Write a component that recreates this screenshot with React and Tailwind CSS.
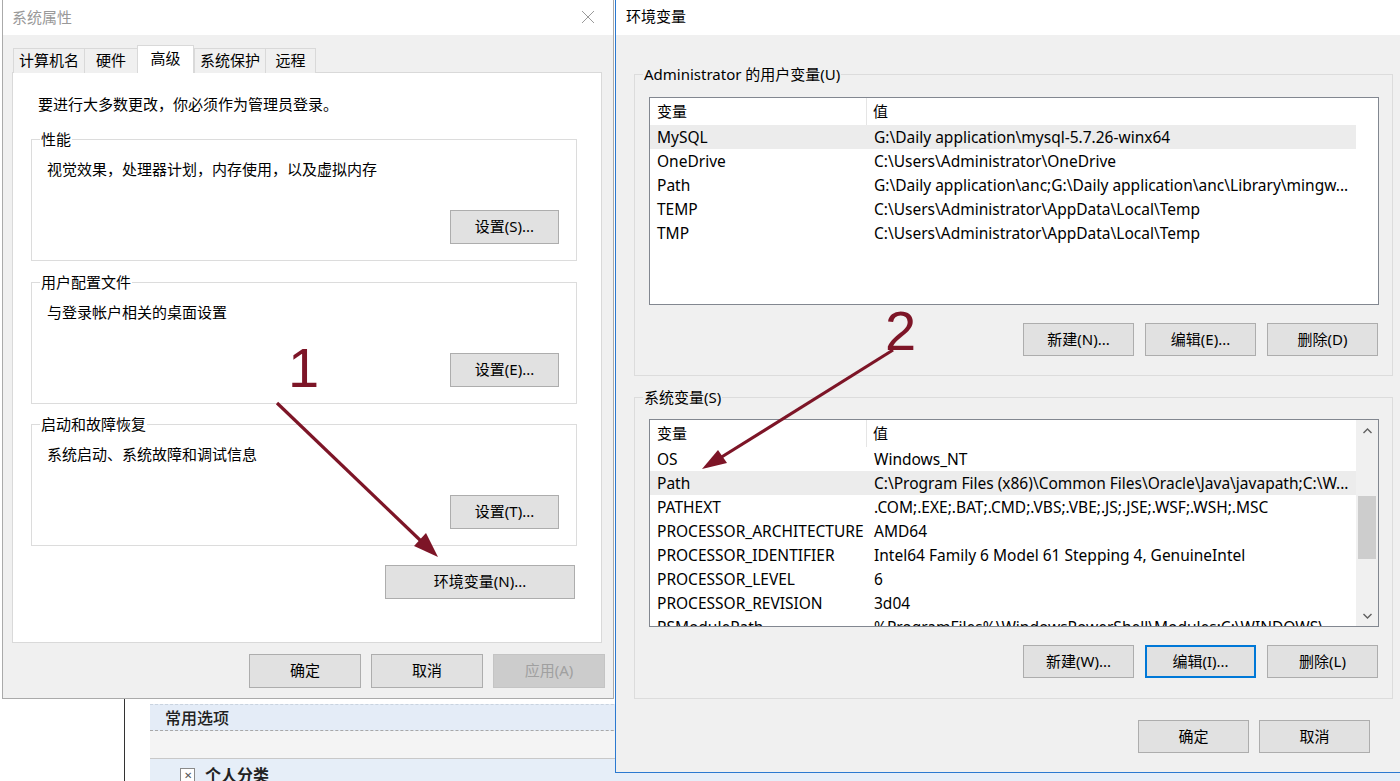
import React from "react";

const FONT = "font-['Noto_Sans','Noto_Sans_CJK_SC',sans-serif]";

function Btn({ children, className = "", disabled = false, focused = false }) {
  let look = "bg-[#e1e1e1] border border-[#adadad] text-black";
  if (disabled) look = "bg-[#cccccc] border border-[#c4c4c4] text-[#a0a0a0]";
  if (focused) look = "bg-[#e1e1e1] border-2 border-[#0078d7] text-black";
  return (
    <div className={`flex items-center justify-center text-[15px] leading-[20px] pb-[2px] shrink-0 ${look} ${className}`}>
      {children}
    </div>
  );
}

function GroupBox({ label, labelBg = "bg-white", className = "", children }) {
  return (
    <div className={`relative border border-[#dcdcdc] shrink-0 ${className}`}>
      <span className={`absolute left-[8px] -top-[11px] px-[1px] text-[15px] leading-[20px] text-black ${labelBg}`}>
        {label}
      </span>
      {children}
    </div>
  );
}

function SysGroup({ label, desc, btn, className = "" }) {
  return (
    <GroupBox label={label} className={`w-[546px] h-[122px] flex flex-col ${className}`}>
      <div className="pl-[15px] pt-[19px] text-[15px] leading-[20px] text-black">{desc}</div>
      <div className="mt-auto mb-[16px] mr-[17px] self-end">
        <Btn className="w-[109px] h-[34px]">{btn}</Btn>
      </div>
    </GroupBox>
  );
}

function Chevron({ up }) {
  return (
    <svg width="9" height="6" viewBox="0 0 9 6">
      <polyline
        points={up ? "0.5,5 4.5,1 8.5,5" : "0.5,1 4.5,5 8.5,1"}
        fill="none"
        stroke="#606060"
        strokeWidth="1.4"
      />
    </svg>
  );
}

function VarList({ rows, highlight, scroll }) {
  return (
    <div className="w-[730px] h-[208px] border border-[#828790] bg-white flex overflow-hidden shrink-0">
      <div className="w-[706px] flex flex-col shrink-0">
        <div className="h-[27px] flex shrink-0 text-[15px] text-black">
          <div className="w-[217px] h-full flex items-center pl-[7px] border-r border-[#e5e5e5]">变量</div>
          <div className="flex-1 h-full flex items-center pl-[6px]">值</div>
        </div>
        {rows.map(([k, v], i) => (
          <div
            key={k}
            className={`h-[24px] flex items-center pt-[2px] shrink-0 text-[15.5px] text-black whitespace-nowrap ${
              i === highlight ? "bg-[#ececec]" : ""
            }`}
          >
            <div className="w-[217px] pl-[7px] overflow-hidden">{k}</div>
            <div className="flex-1 pl-[7px] overflow-hidden">{v}</div>
          </div>
        ))}
      </div>
      {scroll && (
        <div className="w-[22px] h-full bg-[#f0f0f0] flex flex-col items-center shrink-0">
          <div className="h-[21px] w-full flex items-center justify-center">
            <Chevron up />
          </div>
          <div className="w-[18px] h-[63px] bg-[#cdcdcd] mt-[55px]" />
          <div className="mt-auto h-[21px] w-full flex items-center justify-center">
            <Chevron />
          </div>
        </div>
      )}
    </div>
  );
}

const userVars = [
  ["MySQL", "G:\\Daily application\\mysql-5.7.26-winx64"],
  ["OneDrive", "C:\\Users\\Administrator\\OneDrive"],
  ["Path", "G:\\Daily application\\anc;G:\\Daily application\\anc\\Library\\mingw..."],
  ["TEMP", "C:\\Users\\Administrator\\AppData\\Local\\Temp"],
  ["TMP", "C:\\Users\\Administrator\\AppData\\Local\\Temp"],
];

const sysVars = [
  ["OS", "Windows_NT"],
  ["Path", "C:\\Program Files (x86)\\Common Files\\Oracle\\Java\\javapath;C:\\W..."],
  ["PATHEXT", ".COM;.EXE;.BAT;.CMD;.VBS;.VBE;.JS;.JSE;.WSF;.WSH;.MSC"],
  ["PROCESSOR_ARCHITECTURE", "AMD64"],
  ["PROCESSOR_IDENTIFIER", "Intel64 Family 6 Model 61 Stepping 4, GenuineIntel"],
  ["PROCESSOR_LEVEL", "6"],
  ["PROCESSOR_REVISION", "3d04"],
  ["PSModulePath", "%ProgramFiles%\\WindowsPowerShell\\Modules;C:\\WINDOWS\\..."],
];

const tabs = [
  ["计算机名", "w-[71px]"],
  ["硬件", "w-[53px]"],
  ["高级", "w-[57px]"],
  ["系统保护", "w-[71px]"],
  ["远程", "w-[51px]"],
];

function SystemProperties() {
  return (
    <div className="absolute left-[2px] top-0 w-[612px] h-[699px] border-x border-b border-[#aaaaaa] bg-[#f0f0f0] flex flex-col z-10">
      <div className="h-[35px] bg-white flex items-center justify-between pl-[9px] pr-[18px] pb-[2px] shrink-0">
        <span className="text-[15px] leading-[20px] text-[#999999]">系统属性</span>
        <svg width="14" height="14" viewBox="0 0 14 14">
          <path d="M1 1L13 13M13 1L1 13" stroke="#9a9a9a" strokeWidth="1" fill="none" />
        </svg>
      </div>
      <div className="flex flex-col pt-[10px] pl-[9px]">
        <div className="flex items-end h-[28px] ml-[1px] -mb-px relative z-10">
          {tabs.map(([t, w], i) =>
            i === 2 ? (
              <div
                key={t}
                className={`${w} h-[28px] bg-white border-x border-t border-[#d9d9d9] flex items-center justify-center text-[15px] text-black pb-[3px]`}
              >
                {t}
              </div>
            ) : (
              <div
                key={t}
                className={`${w} h-[25px] bg-[#f0f0f0] border-t ${
                  i === 4 ? "border-x" : "border-l"
                } border-[#d9d9d9] flex items-center justify-center text-[15px] text-black pb-[1px]`}
              >
                {t}
              </div>
            )
          )}
        </div>
        <div className="w-[590px] h-[571px] bg-white border border-[#d9d9d9] flex flex-col pl-[18px]">
          <div className="mt-[21px] ml-[7px] text-[15px] leading-[20px] text-black">
            要进行大多数更改，你必须作为管理员登录。
          </div>
          <SysGroup
            className="mt-[25px]"
            label="性能"
            desc="视觉效果，处理器计划，内存使用，以及虚拟内存"
            btn="设置(S)..."
          />
          <SysGroup className="mt-[21px]" label="用户配置文件" desc="与登录帐户相关的桌面设置" btn="设置(E)..." />
          <SysGroup className="mt-[20px]" label="启动和故障恢复" desc="系统启动、系统故障和调试信息" btn="设置(T)..." />
          <div className="mt-[19px] ml-[354px]">
            <Btn className="w-[190px] h-[34px]">环境变量(N)...</Btn>
          </div>
        </div>
        <div className="flex justify-end gap-[10px] pr-[8px] mt-[11px]">
          <Btn className="w-[112px] h-[34px]">确定</Btn>
          <Btn className="w-[112px] h-[34px]">取消</Btn>
          <Btn className="w-[112px] h-[34px]" disabled>
            应用(A)
          </Btn>
        </div>
      </div>
    </div>
  );
}

function EnvVars() {
  return (
    <div className="absolute left-[615px] top-0 w-[800px] h-[773px] border-l border-b border-[#2b79d0] bg-[#f0f0f0] flex flex-col z-10">
      <div className="h-[35px] bg-white flex items-center pl-[10px] pb-[3px] shrink-0">
        <span className="text-[15px] leading-[20px] text-black">环境变量</span>
      </div>
      <div className="flex flex-col pl-[18px]">
        <GroupBox
          label="Administrator 的用户变量(U)"
          labelBg="bg-[#f0f0f0]"
          className="mt-[39px] w-[759px] h-[302px] flex flex-col pl-[14px] pt-[22px]"
        >
          <VarList rows={userVars} highlight={0} />
          <div className="w-[730px] flex justify-end gap-[11px] pr-[1px] mt-[18px]">
            <Btn className="w-[111px] h-[33px]">新建(N)...</Btn>
            <Btn className="w-[111px] h-[33px]">编辑(E)...</Btn>
            <Btn className="w-[111px] h-[33px]">删除(D)</Btn>
          </div>
        </GroupBox>
        <GroupBox
          label="系统变量(S)"
          labelBg="bg-[#f0f0f0]"
          className="mt-[21px] w-[759px] h-[302px] flex flex-col pl-[14px] pt-[21px]"
        >
          <VarList rows={sysVars} highlight={1} scroll />
          <div className="w-[730px] flex justify-end gap-[11px] pr-[1px] mt-[18px]">
            <Btn className="w-[111px] h-[33px]">新建(W)...</Btn>
            <Btn className="w-[111px] h-[33px]" focused>
              编辑(I)...
            </Btn>
            <Btn className="w-[111px] h-[33px]">删除(L)</Btn>
          </div>
        </GroupBox>
        <div className="flex gap-[10px] ml-[504px] mt-[21px]">
          <Btn className="w-[111px] h-[33px]">确定</Btn>
          <Btn className="w-[111px] h-[33px]">取消</Btn>
        </div>
      </div>
    </div>
  );
}

function Annotations() {
  const c = "#7d1527";
  return (
    <>
      <svg className="absolute left-0 top-0 z-20 pointer-events-none" width="1400" height="781" viewBox="0 0 1400 781">
        <line x1="277" y1="403" x2="421" y2="541" stroke={c} strokeWidth="3.2" />
        <polygon points="438,557 414,546 426,533" fill={c} />
        <line x1="893" y1="350" x2="720" y2="458" stroke={c} strokeWidth="3.2" />
        <polygon points="702,469 718,450 727,463" fill={c} />
      </svg>
      <div className="absolute left-[288px] top-[340px] z-20 text-[56px] leading-none font-['Liberation_Sans',sans-serif] text-[#7d1527]">
        1
      </div>
      <div className="absolute left-[885px] top-[303px] z-20 text-[56px] leading-none font-['Liberation_Sans',sans-serif] text-[#7d1527]">
        2
      </div>
    </>
  );
}

export default function App() {
  return (
    <div className={`relative w-[1400px] h-[781px] overflow-hidden bg-white ${FONT}`}>
      {/* background page behind the dialogs */}
      <div className="flex h-full pt-[699px]">
        <div className="w-[124px] shrink-0" />
        <div className="w-px bg-[#333333] shrink-0" />
        <div className="flex-1 ml-[25px] mt-[5px] flex flex-col min-h-0">
          <div className="h-[27px] shrink-0 bg-[#e4ecf7] border-t border-[#c9d3df] flex items-center pl-[15px] text-[16px] font-medium text-[#222222] border-b border-dashed border-b-[#a8a8a8]">
            常用选项
          </div>
          <div className="h-[28px] shrink-0 bg-[#f4f4f4] border-b border-[#c8c8c8]" />
          <div className="h-[40px] shrink-0 bg-[#e6eef8] flex items-start pl-[30px] pt-[6px]">
            <div className="flex items-center gap-[10px]">
              <div className="w-[15px] h-[15px] border border-[#8a8a8a] bg-white flex items-center justify-center text-[10px] text-[#555555] leading-none">
                ✕
              </div>
              <span className="text-[16px] font-bold text-[#222222] leading-[20px]">个人分类</span>
            </div>
          </div>
        </div>
      </div>
      <SystemProperties />
      <EnvVars />
      <Annotations />
    </div>
  );
}
